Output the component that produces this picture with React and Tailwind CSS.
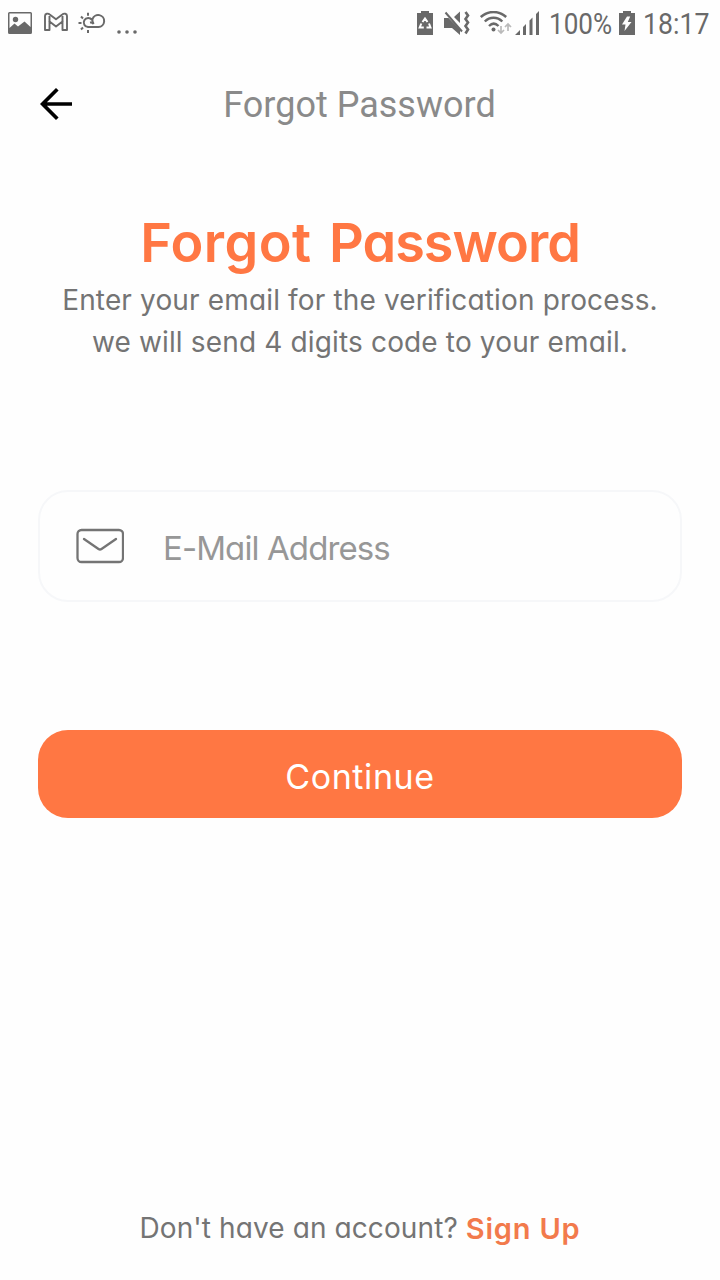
import React from "react";

const muted = "text-[#747474]";

function PictureIcon() {
  return (
    <svg className="block h-6 w-6" viewBox="0 0 24 24" fill="#696969">
      <path fillRule="evenodd" d="M1.500 0h21A1.500 1.500 0 0 1 24 1.500v19A1.500 1.500 0 0 1 22.500 22h-21A1.500 1.500 0 0 1 0 20.500v-19A1.500 1.500 0 0 1 1.500 0ZM1.500 1.500v14.500l5-4.500 3.500 3 6.500-5 6 5.500V1.500Z" />
      <circle cx="7.500" cy="7.500" r="2.700" />
    </svg>
  );
}

function MailLetterIcon() {
  return (
    <svg className="block h-6 w-6" viewBox="0 0 24 24" fill="none" stroke="#696969" strokeWidth="1.900" strokeLinejoin="round">
      <path d="M1 18V4C1 1.500 4 1 5.700 2.500L12 7.300l6.300-4.800C20 1 23 1.500 23 4v14h-4.500V9.500l-6.500 5-6.500-5V18Z" />
      <path d="M5.500 9.500V4M18.500 9.500V4" />
    </svg>
  );
}

function WeatherIcon() {
  return (
    <svg className="block h-6 w-7" viewBox="0 0 28 24" fill="none" stroke="#696969" strokeWidth="2">
      <path d="M15.500 12a3.500 3.500 0 0 0-3.500-1.500M13 15H10a4.500 4.500 0 1 1 4-7M12 15h8.500a6 6 0 1 0-6-8c-.5 2 0 3.500 1.200 5" />
      <path d="M10 .8v3M10 18v3M.5 11h3M3 4.500l2 2M3 17.500l2-2" />
    </svg>
  );
}

function BatteryIcon({ recycle }) {
  return (
    <svg className="block h-6 w-4" viewBox="0 0 16 24">
      <path d="M4 0h8v2h4v22H0V2h4Z" fill="#696969" />
      {recycle ? (
        <g fill="none" stroke="white" strokeWidth="2">
          <path d="m5.500 11 2.500-3.500 2.500 3.500M12 12.500l1.500 4H9.500M6.800 16.500H2.700L4.300 12.500" />
        </g>
      ) : (
        <path d="M8 5.500 3 13.500h3.500L5.500 20l7-9H8.800l2.400-5.500Z" fill="white" />
      )}
    </svg>
  );
}

function MutedIcon() {
  return (
    <svg className="block h-6 w-[26px]" viewBox="0 0 26 24" fill="#696969">
      <path d="M0 7h4.500L16 18.500V24l-8-7H0ZM10 6l6-5.500V12Z" />
      <path d="m1.500 1.500 16.500 19" stroke="#696969" strokeWidth="2" />
      <path d="m21.500 1 2.500 3.500-2.500 3.500 2.500 3.500-2.500 3.500 2.500 3.500-2.500 4" fill="none" stroke="#696969" strokeWidth="2.600" />
    </svg>
  );
}

function WifiIcon() {
  return (
    <svg className="block h-6 w-8" viewBox="0 0 32 24" fill="none" stroke="#696969" strokeWidth="2.400">
      <path d="M.8 6C8-.7 19-.7 26.200 6M4.800 10.500c5-5 12.500-5 17.500 0M9 15c3-3 6.500-3 9.500 0" />
      <circle cx="13.500" cy="18.500" r="2" fill="#696969" stroke="none" />
      <path d="M21 15v7m-3-3 3 3 3-3M28 20v-7m-3 3 3-3 3 3" stroke="#bababa" strokeWidth="1.700" />
    </svg>
  );
}

function SignalIcon() {
  return (
    <svg className="block h-6 w-6" viewBox="0 0 24 24" fill="#696969">
      <path d="m0 24 5-5v5ZM8 16l3-3v11H8ZM14.500 9.500l3-3V24h-3ZM21 3l3-3v24h-3Z" />
    </svg>
  );
}

function StatusBar() {
  return (
    <header className="flex h-12 items-start pt-3 pl-2 font-[Roboto,sans-serif] text-[30px] leading-6 text-[#696969]">
      <PictureIcon />
      <div className="ml-3"><MailLetterIcon /></div>
      <div className="ml-[10px]"><WeatherIcon /></div>
      <svg className="mt-[18px] ml-[11px] h-1 w-5" viewBox="0 0 20 4" fill="#696969">
        <circle cx="2" cy="2" r="1.800" /><circle cx="10" cy="2" r="1.800" /><circle cx="18" cy="2" r="1.800" />
      </svg>
      <div className="ml-[280px] -mt-px"><BatteryIcon recycle /></div>
      <div className="ml-[11px] -mt-px"><MutedIcon /></div>
      <div className="ml-[10px] -mt-px"><WifiIcon /></div>
      <div className="ml-[3px] -mt-px"><SignalIcon /></div>
      <div className="ml-[10px] w-[63px]"><span className="inline-block origin-left scale-x-[0.87]">100%</span></div>
      <div className="ml-[7px] -mt-px"><BatteryIcon /></div>
      <div className="ml-2 w-[66px]"><span className="inline-block origin-left scale-x-[0.89]">18:17</span></div>
    </header>
  );
}

export default function App() {
  return (
    <div className="flex h-[1280px] w-[720px] flex-col overflow-hidden bg-[#fefefe] font-[Inter,sans-serif] whitespace-nowrap [font-feature-settings:'cv11']">
      <StatusBar />
      <nav className="grid h-28 grid-cols-[144px_1fr_144px] items-center">
        <button className="ml-10 w-8" aria-label="Back">
          <svg className="block h-8 w-8" viewBox="0 0 32 32" fill="none" stroke="black" strokeWidth="3.700">
            <path d="M32 16H3M17.300 1.300 2.600 16l14.700 14.700" />
          </svg>
        </button>
        <h2 className="-ml-px pt-0.5 text-center font-[Roboto,sans-serif] text-[36px] leading-[42px] text-[#8a8a8a]">Forgot Password</h2>
      </nav>
      <main className="flex flex-col px-[38px]">
        <h1 className="mt-[50px] text-center text-[54px] leading-[66px] font-semibold text-[#ff7743] [word-spacing:4px]">
          <span className="tracking-[0.4px]">Forgot</span> <span className="tracking-[-1px]">Password</span>
        </h1>
        <p className={`mt-[3px] text-center text-[28px] leading-[42px] tracking-[0.15px] ${muted}`}>
          Enter your email for the verification process.<br />we will send 4 digits code to your email.
        </p>
        <div className="mt-[127px] flex h-28 items-center rounded-[30px] border-2 border-[#f6f7f9] pl-9">
          <svg className="block h-9 w-12" viewBox="0 0 48 36" fill="none" stroke="#747474" strokeWidth="2.300" strokeLinecap="round" strokeLinejoin="round">
            <rect x="1.500" y="2" width="45.500" height="32" rx="4" />
            <path d="m8 11 14.500 10q1.500 1 3 0L40 11" />
          </svg>
          <span className="mt-1 ml-[39px] text-[33px] leading-10 tracking-[-0.9px] text-[#979797]">E-Mail Address</span>
        </div>
        <button className="mt-32 h-[88px] rounded-[30px] bg-[#ff7743] pt-1.5 text-[34px] leading-10 tracking-[0.6px] text-white">Continue</button>
      </main>
      <footer className={`mt-auto flex h-[72px] items-start justify-center gap-2 text-[28px] leading-10 ${muted}`}>
        <span className="tracking-[0.1px]">Don't have an account?</span>
        <a className="pt-px text-[29px] font-semibold tracking-[0.8px] text-[#f27a4c]">Sign Up</a>
      </footer>
    </div>
  );
}
